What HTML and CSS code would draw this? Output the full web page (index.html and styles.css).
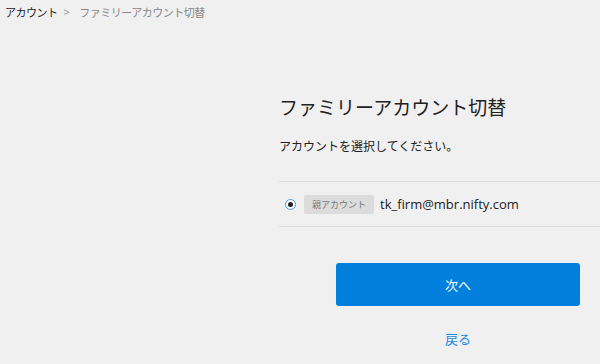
FILE: index.html
```html
<!DOCTYPE html>
<html lang="ja">
<head>
<meta charset="utf-8">
<link rel="stylesheet" href="styles.css">
</head>
<body>
<nav class="crumbs">
  <span class="crumb-link">アカウント</span>
  <span class="crumb-sep">&gt;</span>
  <span class="crumb-current">ファミリーアカウント切替</span>
</nav>
<main class="main">
  <h1 class="title">ファミリーアカウント切替</h1>
  <p class="lead">アカウントを選択してください。</p>
  <div class="list">
    <label class="row">
      <span class="radio"><span class="dot"></span></span>
      <span class="badge">親アカウント</span>
      <span class="email">tk_firm@mbr.nifty.com</span>
    </label>
  </div>
  <div class="actions">
    <button class="next">次へ</button>
    <a class="back">戻る</a>
  </div>
</main>
</body>
</html>
```
FILE: styles.css
```css
html, body {
  margin: 0;
  padding: 0;
  overflow: hidden;
  background: #f0f0f0;
  height: 364px;
}
body {
  font-family: "Noto Sans CJK JP", "Noto Sans", sans-serif;
  color: #222;
}
.crumbs {
  display: flex;
  align-items: center;
  height: 24px;
  padding-left: 5px;
  font-size: 11px;
  letter-spacing: -0.5px;
  line-height: 24px;
}
.crumb-link { color: #222; }
.crumb-sep { color: #999; margin: 0 10px 0 6px; font-family: "Noto Sans", sans-serif; }
.crumb-current { color: #888; }

.main {
  margin-left: 279px;
  width: 321px;
  padding-top: 70px;
}
.title {
  margin: 0;
  font-size: 19px;
  font-weight: normal;
  line-height: 26px;
  color: #222;
}
.lead {
  margin: 17px 0 0;
  font-size: 12px;
  line-height: 18px;
  color: #222;
}
.list {
  margin-top: 26px;
  border-top: 1px solid #ddd;
  border-bottom: 1px solid #ddd;
}
.row {
  display: flex;
  align-items: center;
  height: 44px;
  padding-left: 6px;
}
.radio {
  width: 9px;
  height: 9px;
  border: 1px solid #3b99fc;
  border-radius: 50%;
  background: #fff;
  display: flex;
  align-items: center;
  justify-content: center;
}
.dot {
  width: 5px;
  height: 5px;
  border-radius: 50%;
  background: #222;
}
.badge {
  margin-left: 8px;
  background: #dcdcdc;
  color: #777;
  font-size: 9px;
  height: 19px;
  line-height: 19px;
  padding: 0 8px;
  border-radius: 2px;
}
.email {
  margin-left: 6px;
  font-family: "Open Sans", "Noto Sans", sans-serif;
  font-size: 13px;
  color: #222;
}
.actions {
  display: flex;
  flex-direction: column;
  align-items: flex-start;
  margin-top: 36px;
  padding-left: 57px;
}
.next {
  width: 244px;
  height: 43px;
  border: none;
  border-radius: 3px;
  background: #0080dd;
  color: #fff;
  font-family: "Noto Sans CJK JP", sans-serif;
  font-size: 13px;
  cursor: pointer;
}
.back {
  width: 244px;
  text-align: center;
  margin-top: 24px;
  font-size: 13px;
  line-height: 18px;
  color: #1a8ae5;
}
```
